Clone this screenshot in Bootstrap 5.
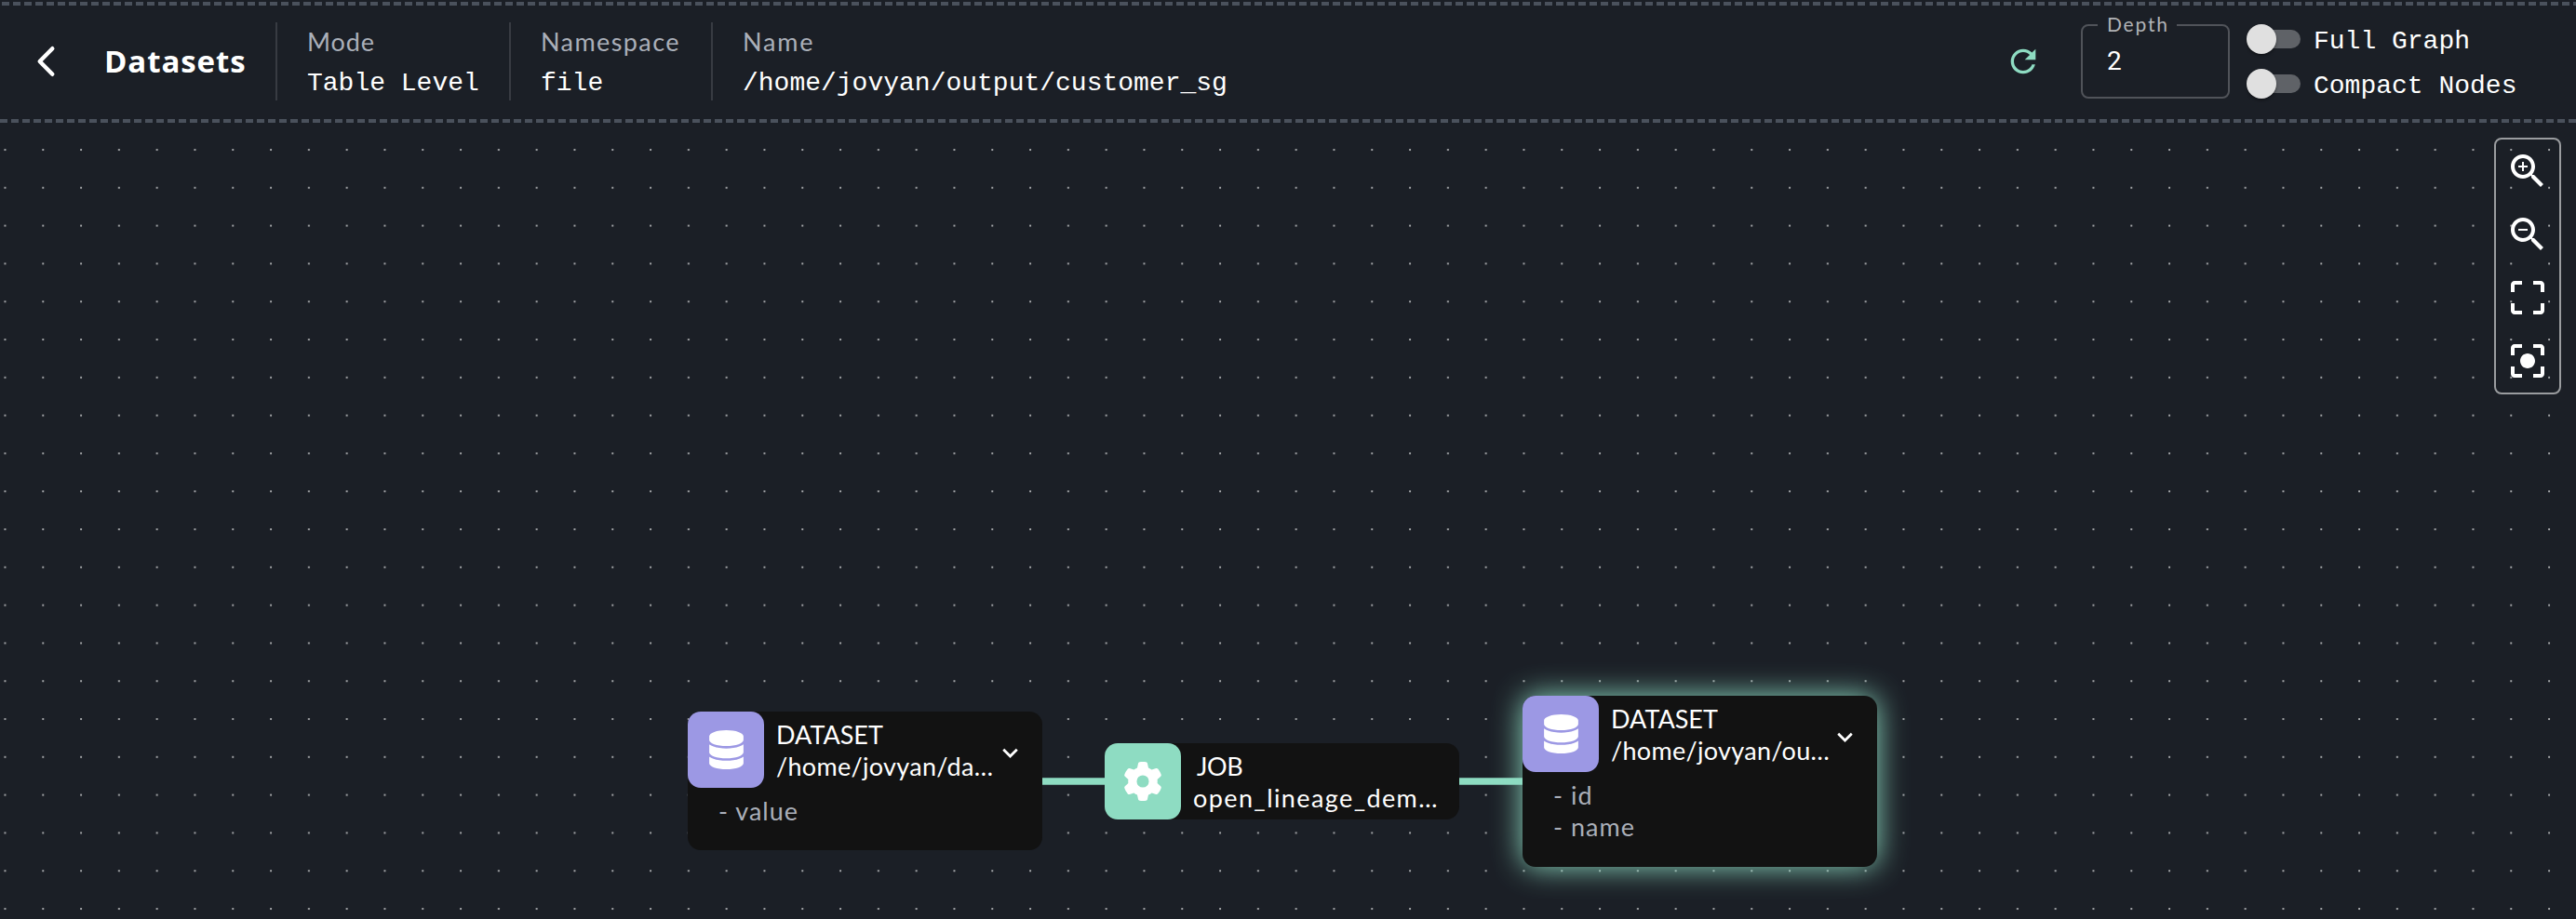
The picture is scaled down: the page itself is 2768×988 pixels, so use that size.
<!DOCTYPE html>
<html lang="en" data-bs-theme="dark">
<head>
<meta charset="utf-8">
<title>Datasets lineage</title>
<link href="https://cdn.jsdelivr.net/npm/bootstrap@5.3.0/dist/css/bootstrap.min.css" rel="stylesheet">
<style>
:root{--bg:#1b1f26;--teal:#8edcc2;--dash:#4a515c;--muted:#aaafb9}
body{background:var(--bg);color:#fff;font-family:Lato,"Liberation Sans",sans-serif;font-size:27px;line-height:34px;height:988px;overflow:hidden}
svg{display:block;flex:none}
.topbar{height:132px;background:
  repeating-linear-gradient(90deg,var(--dash) 0 8px,transparent 8px 12.015px) 2px 2px/2766px 4px no-repeat,
  repeating-linear-gradient(90deg,var(--dash) 0 8px,transparent 8px 12px) 0 128px/100% 4px no-repeat}
.back{width:112px;padding-left:36px}
.title{width:184px;font-family:"Open Sans",Lato,sans-serif;font-size:33px;line-height:40px;font-weight:700;letter-spacing:.9px;margin:0}
.meta{height:84px;border-left:2px solid #383b42;padding:4px 0 0 32px}
.meta .lbl{color:var(--muted);margin-bottom:10px;height:34px}
.mono{font-family:"Liberation Mono",monospace;font-size:28px;line-height:36px;white-space:nowrap}
.w-mode{width:251px}.w-ns{width:217px}
.depth{width:160px;height:80px;border:2px solid #505359;border-radius:8px;margin:0 18px 0 42px;padding:16px 0 0 26px;font-family:Roboto,sans-serif;font-size:28px;line-height:44px}
.depth label{left:16px;top:-16px;background:var(--bg);color:#b1b3b6;font-family:Lato,sans-serif;font-size:21px;line-height:28px;letter-spacing:1.8px;padding:0 8px 0 10px;width:85px}
.toggle{height:48px}
.sw{width:60px;height:32px}
.sw .track{width:44px;height:20px;border-radius:10px;background:#5f6267;margin-left:14px}
.sw .thumb{left:0;top:0;width:32px;height:32px;border-radius:50%;background:#e0e0e0;box-shadow:0 2px 3px rgba(0,0,0,.35)}
.toggle .mono{padding-top:5px;margin-left:12px}
.switches{width:354px}
.canvas{height:856px}
.dots,.edges{left:0;top:0}
.tools{right:16px;top:16px;width:72px;height:276px;border:2px solid #9a9c9f;border-radius:8px;padding:10px;gap:20px}
.nodebox{width:381px;background:#121212;border-radius:14px}
.glow{box-shadow:0 0 32px var(--teal)}
.tile{width:82px;height:82px;border-radius:14px}
.tile.db{background:#9c98e4}.tile.job{background:var(--teal)}
.cap{padding:8px 0 0 13px;white-space:nowrap}
.fields{padding:8px 0 0 33px;color:var(--muted);letter-spacing:1px}
.chev{left:330px;top:28px}
.s0{letter-spacing:-.4px}.s1{letter-spacing:.3px}.s2{letter-spacing:1.4px}.s3{letter-spacing:.9px}.s4{letter-spacing:1.8px}
</style>
</head>
<body>
<svg class="d-none">
  <symbol id="db" viewBox="0 0 448 512"><path d="M448 80v48c0 44.200-100.300 80-224 80S0 172.200 0 128V80C0 35.800 100.300 0 224 0S448 35.800 448 80zM393.200 214.700c20.800-7.400 39.900-16.900 54.800-28.600V288c0 44.200-100.300 80-224 80S0 332.200 0 288V186.100c14.900 11.800 34 21.200 54.800 28.600C99.700 230.700 159.500 240 224 240s124.300-9.300 169.200-25.300zM0 346.100c14.900 11.800 34 21.200 54.800 28.600C99.700 390.700 159.500 400 224 400s124.300-9.300 169.200-25.300c20.800-7.400 39.900-16.900 54.800-28.600V432c0 44.200-100.300 80-224 80S0 476.200 0 432V346.100z"/></symbol>
  <symbol id="chev" viewBox="0 0 24 24"><path d="M16.590 8.590 12 13.170 7.410 8.590 6 10l6 6 6-6z"/></symbol>
</svg>
<header class="topbar d-flex align-items-center">
  <div class="back"><svg width="40" height="40" viewBox="0 0 40 40" fill="none" stroke="#fff" stroke-width="4.400" stroke-linecap="round" stroke-linejoin="round"><path d="M20.300 6.200 6.700 20l13.600 13.800"/></svg></div>
  <h1 class="title">Datasets</h1>
  <div class="meta w-mode"><div class="lbl s3">Mode</div><div class="mono">Table Level</div></div>
  <div class="meta w-ns"><div class="lbl s2">Namespace</div><div class="mono">file</div></div>
  <div class="meta"><div class="lbl s4">Name</div><div class="mono">/home/jovyan/output/customer_sg</div></div>
  <svg class="ms-auto" width="40" height="40" viewBox="0 0 24 24" fill="#8edcc2"><path d="M17.650 6.350C16.200 4.900 14.210 4 12 4c-4.420 0-7.990 3.580-7.990 8s3.570 8 7.990 8c3.730 0 6.840-2.550 7.730-6h-2.080c-.82 2.330-3.040 4-5.650 4-3.310 0-6-2.690-6-6s2.690-6 6-6c1.660 0 3.140.69 4.220 1.780L13 11h7V4l-2.350 2.350z"/></svg>
  <div class="depth position-relative"><label class="position-absolute">Depth</label>2</div>
  <div class="switches">
    <div class="toggle d-flex align-items-center"><div class="sw position-relative d-flex align-items-center"><div class="track"></div><div class="thumb position-absolute"></div></div><div class="mono">Full Graph</div></div>
    <div class="toggle d-flex align-items-center"><div class="sw position-relative d-flex align-items-center"><div class="track"></div><div class="thumb position-absolute"></div></div><div class="mono">Compact Nodes</div></div>
  </div>
</header>
<main class="canvas position-relative">
  <svg class="dots position-absolute" width="2768" height="856">
    <defs><pattern id="grid" x="4.400" y="28" width="40.800" height="40.800" patternUnits="userSpaceOnUse"><circle cx="1.100" cy="1.100" r="1.100" fill="#b4b6b8"/></pattern></defs>
    <rect width="2768" height="856" fill="url(#grid)"/>
  </svg>
  <svg class="edges position-absolute" width="2768" height="856" stroke="#8edcc2" stroke-width="7.400"><path d="M1115 708H1192M1564 708H1640"/></svg>

  <div class="nodebox position-absolute" style="left:739px;top:633px;height:149px">
    <div class="d-flex"><div class="tile db d-flex align-items-center justify-content-center"><svg width="37" height="42" fill="#fff"><use href="#db"/></svg></div>
      <div class="cap"><div>DATASET</div><div class="s1">/home/jovyan/da…</div></div></div>
    <div class="fields"><div>- value</div></div>
    <svg class="chev position-absolute" width="33" height="33" fill="#fff"><use href="#chev"/></svg>
  </div>
  <div class="nodebox position-absolute" style="left:1187px;top:667px;height:82px">
    <div class="d-flex"><div class="tile job d-flex align-items-center justify-content-center"><svg width="42" height="42" viewBox="0 0 512 512" fill="#fff"><path d="M495.900 166.600c3.200 8.700 .5 18.400-6.400 24.600l-43.300 39.400c1.100 8.300 1.700 16.800 1.700 25.400s-.6 17.100-1.700 25.400l43.300 39.400c6.900 6.200 9.600 15.900 6.400 24.600c-4.400 11.900-9.700 23.300-15.800 34.300l-4.700 8.100c-6.600 11-14 21.400-22.100 31.200c-5.900 7.200-15.700 9.600-24.500 6.800l-55.700-17.700c-13.400 10.300-28.200 18.900-44 25.400l-12.500 57.100c-2 9.100-9 16.300-18.200 17.800c-13.800 2.300-28 3.500-42.500 3.500s-28.700-1.200-42.500-3.500c-9.200-1.500-16.200-8.700-18.200-17.800l-12.500-57.100c-15.800-6.500-30.600-15.100-44-25.400L83.100 425.900c-8.800 2.800-18.600 .3-24.500-6.800c-8.100-9.800-15.500-20.200-22.100-31.200l-4.700-8.100c-6.100-11-11.400-22.400-15.800-34.300c-3.200-8.700-.5-18.400 6.400-24.600l43.300-39.400C64.600 273.100 64 264.600 64 256s.6-17.100 1.700-25.400L22.400 191.200c-6.900-6.200-9.600-15.900-6.400-24.600c4.400-11.900 9.700-23.300 15.800-34.300l4.700-8.100c6.600-11 14-21.400 22.100-31.200c5.900-7.200 15.700-9.600 24.500-6.800l55.700 17.700c13.400-10.300 28.200-18.900 44-25.400l12.500-57.100c2-9.100 9-16.300 18.200-17.800C227.300 1.200 241.500 0 256 0s28.700 1.200 42.500 3.500c9.200 1.500 16.200 8.700 18.200 17.800l12.500 57.100c15.800 6.500 30.600 15.100 44 25.400l55.700-17.700c8.800-2.800 18.600-.3 24.500 6.800c8.100 9.800 15.500 20.200 22.100 31.200l4.700 8.100c6.100 11 11.400 22.400 15.800 34.300zM256 336a80 80 0 1 0 0-160 80 80 0 1 0 0 160z"/></svg></div>
      <div class="cap"><div class="s0 ms-1">JOB</div><div class="s2">open_lineage_dem…</div></div></div>
  </div>
  <div class="nodebox glow position-absolute" style="left:1636px;top:616px;height:183.600px">
    <div class="d-flex"><div class="tile db d-flex align-items-center justify-content-center"><svg width="37" height="42" fill="#fff"><use href="#db"/></svg></div>
      <div class="cap"><div>DATASET</div><div class="s1">/home/jovyan/ou…</div></div></div>
    <div class="fields"><div>- id</div><div>- name</div></div>
    <svg class="chev position-absolute" width="33" height="33" fill="#fff"><use href="#chev"/></svg>
  </div>

  <div class="tools position-absolute d-flex flex-column align-items-center">
    <svg width="48" height="48" viewBox="0 0 24 24" fill="#fff"><path d="M15.500 14h-.79l-.28-.27C15.410 12.590 16 11.110 16 9.500 16 5.910 13.090 3 9.500 3S3 5.910 3 9.500 5.910 16 9.500 16c1.610 0 3.090-.59 4.230-1.570l.27.28v.79l5 4.990L20.490 19l-4.990-5zm-6 0C7.010 14 5 11.990 5 9.500S7.010 5 9.500 5 14 7.010 14 9.500 11.990 14 9.500 14zm2.500-4h-2v2H9v-2H7V9h2V7h1v2h2v1z"/></svg>
    <svg width="48" height="48" viewBox="0 0 24 24" fill="#fff"><path d="M15.500 14h-.79l-.28-.27C15.410 12.590 16 11.110 16 9.500 16 5.910 13.090 3 9.500 3S3 5.910 3 9.500 5.910 16 9.500 16c1.610 0 3.090-.59 4.230-1.570l.27.28v.79l5 4.990L20.490 19l-4.990-5zm-6 0C7.010 14 5 11.990 5 9.500S7.010 5 9.500 5 14 7.010 14 9.500 11.990 14 9.500 14zM7 9h5v1H7z"/></svg>
    <svg width="48" height="48" viewBox="0 0 24 24" fill="#fff"><path d="M3 5v4h2V5h4V3H5c-1.100 0-2 .9-2 2zm2 10H3v4c0 1.100.9 2 2 2h4v-2H5v-4zm14 4h-4v2h4c1.100 0 2-.9 2-2v-4h-2v4zm0-16h-4v2h4v4h2V5c0-1.100-.9-2-2-2z"/></svg>
    <svg width="48" height="48" viewBox="0 0 24 24" fill="#fff"><path d="M12 8c-2.210 0-4 1.790-4 4s1.790 4 4 4 4-1.790 4-4-1.790-4-4-4zm-7 7H3v4c0 1.100.9 2 2 2h4v-2H5v-4zM5 5h4V3H5c-1.100 0-2 .9-2 2v4h2V5zm14-2h-4v2h4v4h2V5c0-1.100-.9-2-2-2zm0 16h-4v2h4c1.100 0 2-.9 2-2v-4h-2v4z"/></svg>
  </div>
</main>
<script src="https://cdn.jsdelivr.net/npm/bootstrap@5.3.0/dist/js/bootstrap.bundle.min.js"></script>
</body>
</html>
